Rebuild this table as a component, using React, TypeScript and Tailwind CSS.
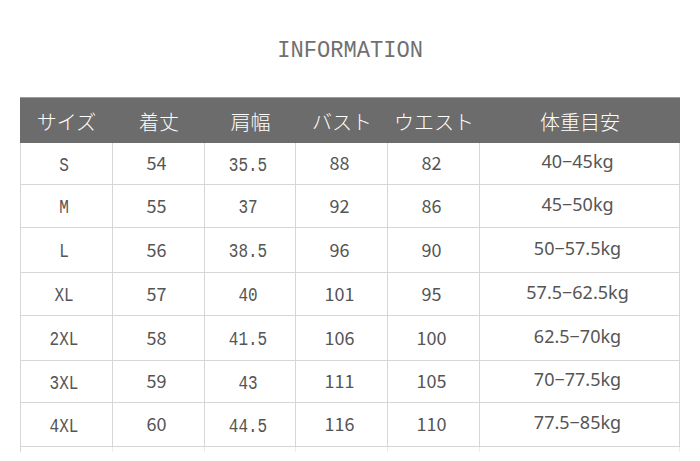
const cols = ["w-[92px]", "w-[92px]", "w-[91px]", "w-[92px]", "w-[92px]", "w-[200px]"];

const heads = ["サイズ", "着丈", "肩幅", "バスト", "ウエスト", "体重目安"];

const rows = [
  { h: "h-[42px]", cells: ["S", "54", "35.5", "88", "82", "40−45kg"] },
  { h: "h-[43px]", cells: ["M", "55", "37", "92", "86", "45−50kg"] },
  { h: "h-[45px]", cells: ["L", "56", "38.5", "96", "90", "50−57.5kg"] },
  { h: "h-[43px]", cells: ["XL", "57", "40", "101", "95", "57.5−62.5kg"] },
  { h: "h-[45px]", cells: ["2XL", "58", "41.5", "106", "100", "62.5−70kg"] },
  { h: "h-[42px]", cells: ["3XL", "59", "43", "111", "105", "70−77.5kg"] },
  { h: "h-[44px]", cells: ["4XL", "60", "44.5", "116", "110", "77.5−85kg"] },
];

const sans = "font-['Noto_Sans_CJK_JP',sans-serif]";
const mono = "font-['Liberation_Mono',monospace]";

export default function App() {
  return (
    <div className="w-[700px] h-[461px] bg-white overflow-hidden">
      <div className="pt-[37px] h-[97px] text-center">
        <span className={`${mono} inline-block scale-x-[0.92] text-[24px] leading-[28px] text-[#707070]`}>INFORMATION</span>
      </div>
      <div className="mx-auto w-[660px]">
        <div className="flex h-[46px] bg-[#6c6c6c] border-t border-[#9a9a9a]">
          {heads.map((t, i) => (
            <div
              key={t}
              className={`${cols[i]} ${i === 0 ? "w-[93px]" : ""} flex items-center justify-center pt-[3px] ${sans} text-[20px] font-light text-white`}
            >
              {t}
            </div>
          ))}
        </div>
        <div className="border-l border-[#d6d6d6]">
          {rows.map((r) => (
            <div key={r.cells[0]} className={`flex ${r.h} border-b border-[#d6d6d6]`}>
              {r.cells.map((c, i) => (
                <div
                  key={i}
                  className={`${cols[i]} border-r border-[#d6d6d6] flex items-center justify-center pb-[2px] pr-[4px] text-[#555]`}
                >
                  {i === 0 || i === 2 ? (
                    <span className={`${mono} inline-block scale-x-[0.8] text-[20px] leading-[20px] mt-[6px]`}>{c}</span>
                  ) : i === 5 ? (
                    <span className="font-['Noto_Sans',sans-serif] text-[18px] -mt-[2px]">{c}</span>
                  ) : (
                    <span className={`${sans} text-[18px]`}>{c}</span>
                  )}
                </div>
              ))}
            </div>
          ))}
          <div className="flex h-[5px]">
            {cols.map((w, i) => (
              <div key={i} className={`${w} border-r border-[#ececec]`} />
            ))}
          </div>
        </div>
      </div>
    </div>
  );
}
